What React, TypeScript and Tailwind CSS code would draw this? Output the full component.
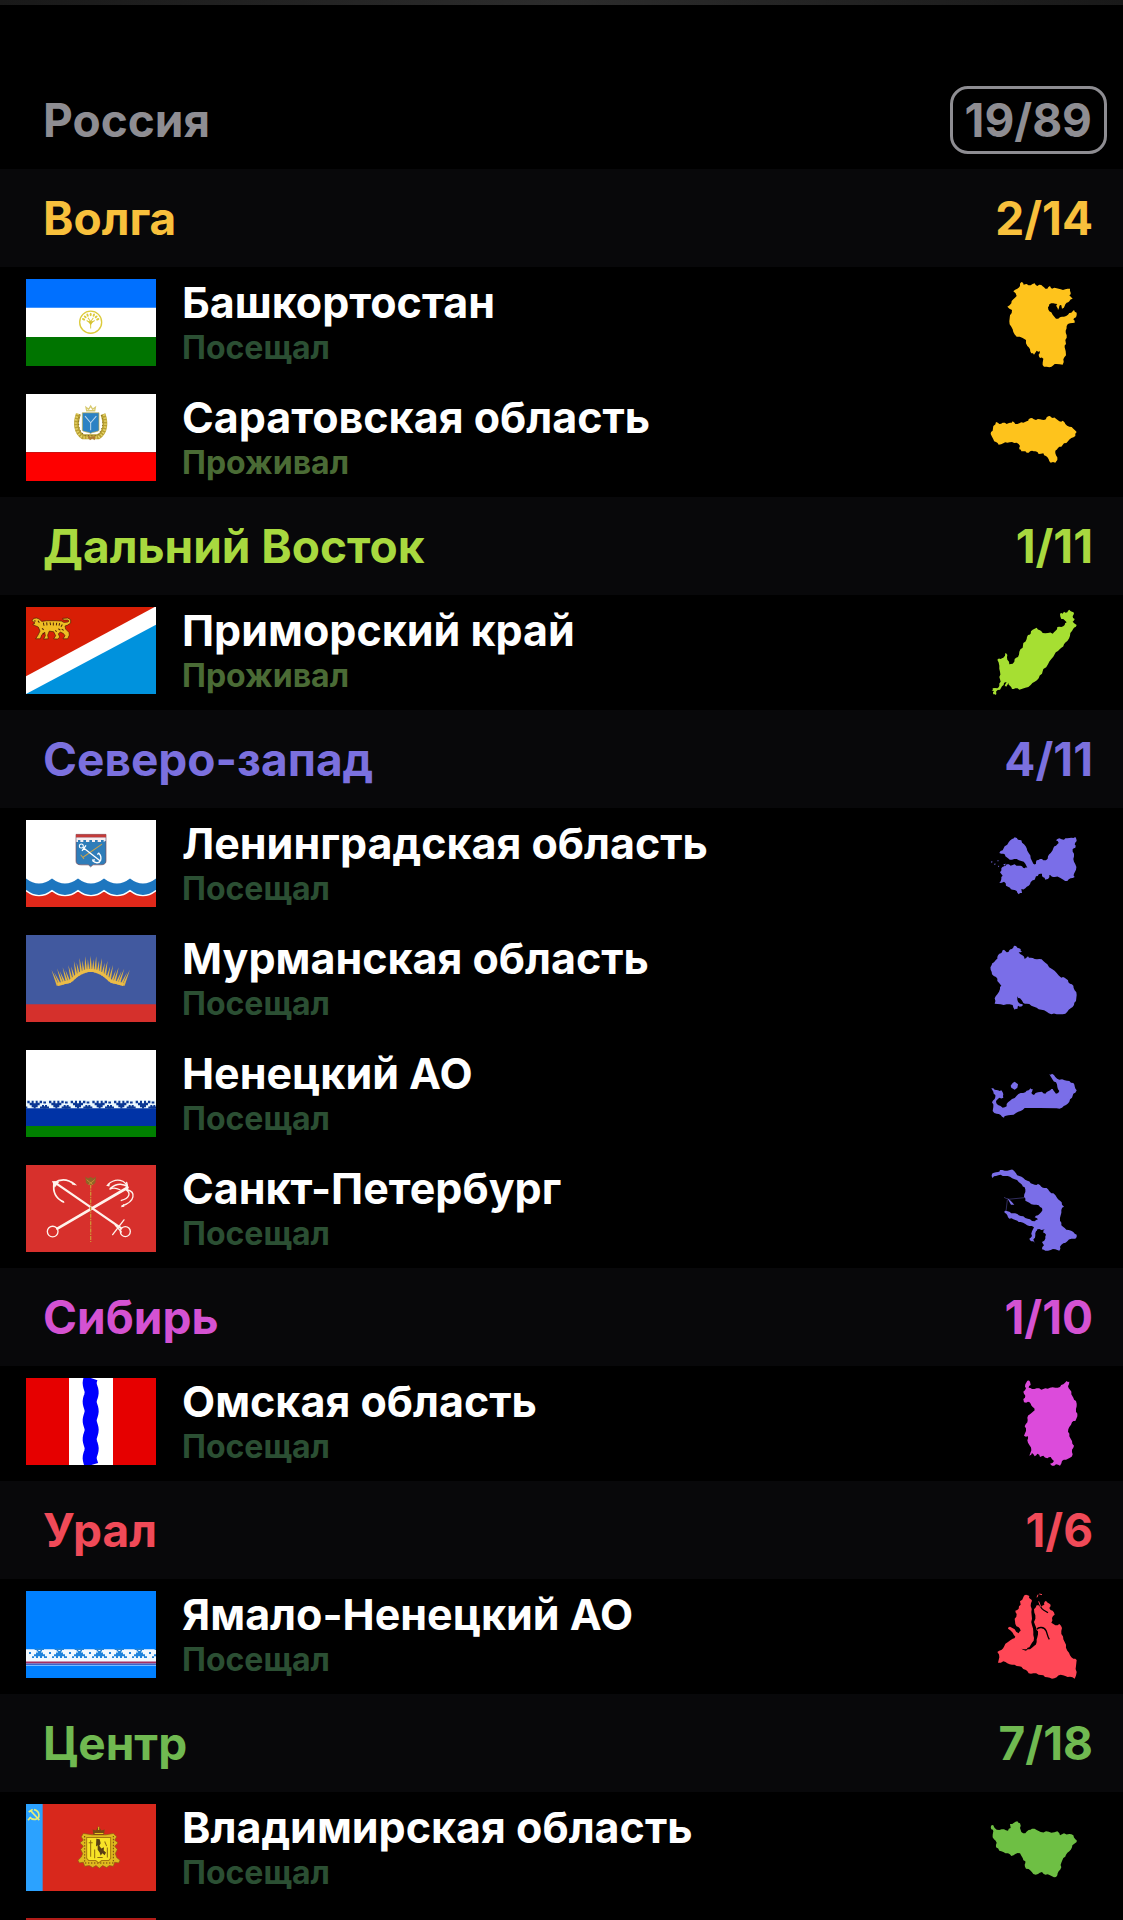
import type { ReactNode } from "react";

type Region = {
  name: string;
  status: "Посещал" | "Проживал";
  flag: ReactNode;
  viewBox: string;
  outline: string;
  extra?: ReactNode;
};

type District = {
  name: string;
  count: string;
  text: string;
  fill: string;
  regions: Region[];
};

const range = (n: number) => Array.from({ length: n }, (_, i) => i);

/** Turns "x,y x,y ..." into a closed path whose edges are slightly rugged, like a real border. */
function borderPath(outline: string) {
  const points = outline.trim().split(/\s+/).map((p) => p.split(",").map(Number));
  let d = "";
  points.forEach(([x, y], i) => {
    const [nx, ny] = points[(i + 1) % points.length];
    const length = Math.hypot(nx - x, ny - y) || 1;
    d += `${i ? "L" : "M"}${x} ${y}`;
    if (length < 30) {
      const side = (((i * 7) % 5) - 2) * 1.1;
      const mx = (x + nx) / 2 - ((ny - y) / length) * side;
      const my = (y + ny) / 2 + ((nx - x) / length) * side;
      d += `L${mx.toFixed(1)} ${my.toFixed(1)}`;
    }
  });
  return `${d}z`;
}

function BashkortostanFlag() {
  return (
    <>
      <path fill="#fff" d="M0 0h390v260H0z" />
      <path fill="#0070ff" d="M0 0h390v86H0z" />
      <path fill="#007400" d="M0 173h390v87H0z" />
      <circle cx="194" cy="129" r="33" fill="none" stroke="#dccb3c" strokeWidth="4" />
      <path fill="none" stroke="#dccb3c" strokeWidth="3" d="M194 148v-24M194 132l-12-8M194 132l12-8M194 128l-8-12M194 128l8-12" />
      {[-68, -46, -24, 0, 24, 46, 68].map((a) => (
        <ellipse key={a} cx="194" cy="106" rx="3" ry="5" fill="#dccb3c" transform={`rotate(${a} 194 129)`} />
      ))}
      <path fill="#d4c02e" d="M186 126h16l-8 12z" />
    </>
  );
}

function SaratovFlag() {
  return (
    <>
      <path fill="#fff" d="M0 0h390v174H0z" />
      <path fill="#fe0000" d="M0 174h390v86H0z" />
      <path fill="none" stroke="#b9a032" strokeWidth="15" d="M157 60c-9 26-8 54 14 68h46c22-14 23-42 14-68" />
      <path fill="none" stroke="#e6d46a" strokeWidth="8" strokeDasharray="4 5" d="M155 58c-9 28-8 58 16 72h46c24-14 25-44 16-72" />
      <path fill="none" stroke="#7d6a24" strokeWidth="3" strokeDasharray="3 7" d="M162 60c-8 26-5 50 14 64h36c19-14 22-38 14-64" />
      <path fill="#2b82c4" stroke="#c8b04a" strokeWidth="2" d="M169 56h50v52c0 5-20 5-25 10-5-5-25-5-25-10z" />
      <path fill="none" stroke="#bcd9ee" strokeWidth="3" d="M177 66l17 20 17-20M194 86v22" />
      <path fill="none" stroke="#d8ca70" strokeWidth="4" d="M182 50l-2-10 8 6 6-10 6 10 8-6-2 10z" />
      <path fill="#b07a34" d="M184 126h8l3 4 4-4h9l-2 12-7-5-7 5z" />
    </>
  );
}

function PrimoryeFlag() {
  return (
    <>
      <path fill="#fff" d="M0 0h390v260H0z" />
      <path fill="#d81e05" d="M0 0h386L0 207z" />
      <path fill="#0092dd" d="M0 260L390 53v207z" />
      <path
        fill="#efbd24"
        stroke="#4a1d08"
        strokeWidth="2"
        strokeLinejoin="round"
        d="M18 41L23 34L32 33L40 36L47 43L62 41L90 41L106 42L114 46L125 45L129 42L125 39L112 39L110 34L125 33L134 38L134 48L125 54L117 57L119 66L129 76L130 84L125 95L111 95L117 86L112 79L103 75L97 80L101 90L95 96L83 95L89 86L83 74L70 72L65 84L67 95L53 96L58 86L56 75L47 84L43 95L29 95L36 84L42 72L37 60L28 56L20 52L27 48z"
      />
      <path fill="none" stroke="#4a1d08" strokeWidth="3" d="M52 47l2 9M62 46l1 9M72 46l2 8M82 46v9M92 47l-1 8M101 48l-2 8M109 52l-4 7M48 64l5 4M97 65l6 4M107 66l6 4M24 42h5M36 41l4 6M50 78l4 3M88 70l4 4" />
    </>
  );
}

function LeningradFlag() {
  const wave = (y: number) =>
    `M0 ${y}` + range(5).map((i) => `Q${i * 78 + 39} ${y + 30} ${i * 78 + 78} ${y}`).join("");
  return (
    <>
      <path fill="#fff" d="M0 0h390v260H0z" />
      <path fill="#1d76bf" d={`${wave(175)}V240H0z`} />
      <path fill="#e0281a" d={`${wave(212)}V260H0z`} />
      <path fill="none" stroke="#fff" strokeWidth="4" d={wave(211)} />
      <path fill="#2f7db9" stroke="#7d4c55" strokeWidth="2" d="M150 43h90v80c0 8-8 11-16 11h-23l-7 6-7-6h-22c-9 0-15-3-15-11z" />
      <path fill="#c43a38" d="M150 43h90v10h-90z" />
      <path fill="#f7eef0" d="M151 52h88v10l-6 4v-6h-8v6h-10v-6h-8v6h-9v-6h-8v6h-10v-6h-8v6h-9v-6h-7v6h-5z" />
      <path fill="none" stroke="#c9a24c" strokeWidth="3" d="M170 112l58-40M164 104l10 12" />
      <circle cx="166" cy="78" r="6" fill="none" stroke="#fff" strokeWidth="3" />
      <path fill="none" stroke="#fff" strokeWidth="4" d="M171 82l50 39M180 76l-12 16M200 122c8 8 20 8 24-2 2-8-1-16-5-20M198 120l9-1M214 103l6-5" />
    </>
  );
}

function MurmanskFlag() {
  const base = (x: number) => {
    const d = Math.abs(x - 194);
    return d < 60 ? 106 + (d * d) / 112 : 138 + (d - 60) * 0.26;
  };
  return (
    <>
      <path fill="#41599f" d="M0 0h390v260H0z" />
      <path fill="#d5302c" d="M0 207h390v53H0z" />
      {range(29).map((i) => {
        const x = 96 + i * 7;
        const y = base(x);
        const dx = (x - 194) * 0.2;
        const length = i % 2 ? 34 : 44;
        return <path key={i} fill="#e2b544" d={`M${x - 4} ${y + 4}L${x + dx} ${y - length}L${x + 4} ${y + 4}z`} />;
      })}
      <path
        fill="none"
        stroke="#ecbc48"
        strokeWidth="9"
        strokeLinejoin="round"
        d={"M" + range(29).map((i) => `${96 + i * 7} ${base(96 + i * 7)}`).join("L")}
      />
    </>
  );
}

function NenetsFlag() {
  return (
    <>
      <path fill="#fff" d="M0 0h390v160H0z" />
      <path fill="#0033a6" d="M0 173h390v54H0z" />
      <path fill="#008000" d="M0 227h390v33H0z" />
      <path fill="#eaf7fd" d="M0 150h390v24H0z" />
      {range(7).map((i) => (
        <g key={i} transform={`translate(${i * 65 - 8} 152)`} fill="#0b3894">
          <path d="M12 0h7v6h6V0h6v7h6V0h6v6h6V0h7v7h-7v6h-6v6h-6v4H31v-4h-6v-6h-6V7h-7z" />
          <path d="M-5 2h8v6h-8zM-6 17h6v-5h6v5h6v6H-6zM50 23v-6h6v-5h6v5h6v6z" />
        </g>
      ))}
    </>
  );
}

function PetersburgFlag() {
  return (
    <>
      <path fill="#d7302c" d="M0 0h390v260H0z" />
      <g fill="none" stroke="#fff3ec" strokeLinecap="round">
        <path strokeWidth="7" d="M86 52l198 136" />
        <path strokeWidth="8" d="M94 190L304 68" />
        <circle cx="80" cy="199" r="16" strokeWidth="4" />
        <circle cx="298" cy="199" r="15" strokeWidth="4" />
        <path strokeWidth="5" d="M84 54c20-14 42-12 62 4M84 54c-4 26 6 46 28 56" />
        <path strokeWidth="4" d="M260 208l34-44M268 180l18 20" />
        <path strokeWidth="4" d="M304 68c-4-24-34-32-58-10M306 66c-16-12-36-10-54 4M302 52c4 10 2 16 2 22M304 74c24 6 26 34-16 48M300 74c16 10 10 26-14 32M282 74c-12-6-22-6-30-2" />
      </g>
      <path fill="#fff3ec" d="M78 48l22 2-14 18zM136 48l18 13-16-3zM102 106l16 6-10-1zM240 62l12-8-2 10zM284 126l10-10 1 9z" />
      <path fill="none" stroke="#cf9136" strokeWidth="4" strokeDasharray="12 3 4 3" d="M194 58v172" />
      <path fill="#8f6427" d="M178 34l8 6 8-4 8 4 8-6-2 20-8 6h-12l-8-6z" />
      <path fill="none" stroke="#d8a23c" strokeWidth="2" d="M182 44l12 10 12-10M188 60l6-8 6 8" />
    </>
  );
}

function OmskFlag() {
  const river = range(53)
    .map((i) => `${(194 - 3 * Math.cos(((i * 5 - 71) / 56) * 2 * Math.PI)).toFixed(1)} ${i * 5}`)
    .join("L");
  return (
    <>
      <path fill="#e60000" d="M0 0h390v260H0z" />
      <path fill="#fff" d="M129 0h132v260H129z" />
      <path fill="none" stroke="#0000fe" strokeWidth="42" d={`M${river}`} />
    </>
  );
}

function YamalFlag() {
  return (
    <>
      <path fill="#0080ff" d="M0 0h390v260H0z" />
      <path fill="#f1f8ff" d="M0 198h390v25H0z" />
      <path fill="#a52f62" d="M0 211h390v6H0z" />
      <path fill="#3e62c8" d="M0 217h390v4H0z" />
      <path fill="#f1f8ff" d="M0 174h390v26H0z" />
      {range(7).map((i) => (
        <g key={i} transform={`translate(${i * 60 - 18} 0)`} fill="#1f83dc">
          <path d="M36 200v-5h6v-6h6v-5h6v-5h9v5h6v5h6v6h6v5h-9v-5h-6v5h-6v-5h-6v5h-6v-5h-6v5z" />
          <path d="M44 172h28v4h-6v5h-5v-5h-6v5h-5v-5h-6zM27 182h6v6h-6z" />
        </g>
      ))}
    </>
  );
}

function VladimirFlag() {
  return (
    <>
      <path fill="#d8281c" d="M0 0h390v260H0z" />
      <path fill="#2ba2ff" d="M0 0h50v260H0z" />
      <path fill="none" stroke="#e3ec7a" strokeWidth="5" d="M24 17c18 4 20 26 4 29-9 1-14-3-17-7M8 24l12-8M14 20l26 28M12 42l-6 6" />
      <path
        fill="#dfb91e"
        stroke="#8a5d14"
        strokeWidth="2"
        d="M198 92L172 88L166 98L172 108L162 116L172 126L164 136L170 148L166 158L156 168L160 176L172 174L176 186L190 184L200 190L210 184L220 192L230 184L242 190L250 184L262 186L266 174L278 176L282 168L272 160L268 148L274 136L266 126L276 116L266 108L272 98L262 88L240 92z"
      />
      <path fill="#7a4a10" d="M202 92l-2-16 10 3 8-13 8 13 10-3-2 16z" />
      <path fill="none" stroke="#e6c51f" strokeWidth="3" d="M206 88h26M218 68v10" />
      <path fill="none" stroke="#6d4110" strokeWidth="3" strokeDasharray="4 5" d="M176 96v80h86V96" />
      <path fill="#f7e327" stroke="#a7780f" strokeWidth="3" d="M182 100h72v62l-6 7h-21l-9 7-9-7h-21l-6-7z" />
      <path fill="#5a3f14" d="M211 104l10 1 3 12-4 8 6 8 8-4-1 10 7 6-4 8-7-6-5 8-3-10-6-8v-14l-5 4z" />
      <path fill="none" stroke="#8f6a10" strokeWidth="3" d="M194 108v50M188 116h12M206 136v26M236 112l6 14M244 130v30M214 160h16" />
    </>
  );
}

const districts: District[] = [
  {
    name: "Волга",
    count: "2/14",
    text: "text-[#f8c03c]",
    fill: "text-[#fec31c]",
    regions: [
      {
        name: "Башкортостан",
        status: "Посещал",
        flag: <BashkortostanFlag />,
        viewBox: "90 63 261 261",
        outline:
          "184,66 191,74 200,72 212,76 224,70 232,78 244,75 252,82 262,86 270,78 276,86 290,85 302,88 316,88 330,86 332,98 328,106 338,116 328,124 320,128 314,138 306,146 304,136 298,138 294,150 290,140 292,132 280,130 268,133 264,142 268,154 278,164 288,176 300,172 312,170 324,164 334,158 342,150 350,158 348,172 340,178 344,188 330,190 320,198 317,212 320,226 316,240 318,252 314,262 318,286 310,298 308,314 290,312 280,316 268,322 252,320 248,308 250,296 240,294 236,284 240,274 230,272 222,284 214,280 210,268 202,258 198,240 188,234 170,230 160,216 154,200 148,184 150,166 156,150 142,140 154,130 160,118 170,108 160,94 172,86 180,78",
      },
      {
        name: "Саратовская область",
        status: "Проживал",
        flag: <SaratovFlag />,
        viewBox: "90 406 261 261",
        outline:
          "92,520 98,510 100,496 108,484 118,490 128,486 140,490 150,486 158,482 166,490 178,488 190,486 200,482 206,476 216,472 228,478 240,476 252,478 260,470 270,466 278,472 288,474 298,482 308,480 316,490 328,498 340,504 350,514 346,526 334,532 324,542 312,548 304,558 294,562 286,570 288,584 292,598 286,606 272,606 266,596 258,586 250,578 236,580 226,572 216,570 206,576 196,572 184,572 178,566 180,556 170,546 156,544 142,546 130,548 116,552 108,544 100,536",
      },
    ],
  },
  {
    name: "Дальний Восток",
    count: "1/11",
    text: "text-[#a8d93f]",
    fill: "text-[#a6df32]",
    regions: [
      {
        name: "Приморский край",
        status: "Проживал",
        flag: <PrimoryeFlag />,
        viewBox: "90 58 261 261",
        outline:
          "300,72 308,72 312,66 322,68 328,60 336,66 342,72 338,80 344,88 338,96 350,106 342,114 336,124 330,138 322,154 312,164 304,174 294,184 284,194 274,208 264,224 250,238 246,252 236,266 224,276 212,286 196,294 178,300 166,296 156,298 150,288 146,280 138,292 134,290 140,278 132,280 126,290 120,300 108,306 108,316 100,314 102,304 95,302 98,296 112,296 118,288 122,276 118,262 120,246 118,228 112,210 122,208 130,204 136,190 142,196 142,210 148,224 158,222 164,208 174,202 178,186 188,174 190,160 200,148 204,136 212,132 218,120 230,114 240,122 248,130 264,130 278,132 286,124 292,112 304,112 314,106 320,98 314,92 304,88",
      },
    ],
  },
  {
    name: "Северо-запад",
    count: "4/11",
    text: "text-[#7b70de]",
    fill: "text-[#7a6ee8]",
    regions: [
      {
        name: "Ленинградская область",
        status: "Посещал",
        flag: <LeningradFlag />,
        viewBox: "90 697 261 261",
        outline:
          "118,790 128,782 134,770 146,758 156,748 164,743 174,750 184,752 192,764 200,776 206,790 212,806 220,822 228,822 230,812 240,808 250,812 258,812 264,800 272,790 280,776 288,768 296,760 288,752 298,746 312,750 322,746 334,744 346,742 350,754 344,764 346,774 338,778 342,792 340,808 346,824 348,840 342,852 344,862 332,866 322,874 310,870 300,864 284,862 274,860 268,856 264,868 256,870 248,862 246,852 236,854 228,860 224,870 212,878 206,888 196,896 184,898 186,910 176,914 170,904 158,900 150,894 138,888 132,876 118,880 124,868 128,858 120,848 124,836 132,830 140,824 152,828 164,824 176,828 186,830 194,836 202,834 196,822 184,814 170,808 156,810 144,806 136,800 130,792",
        extra: <path d="M93 815l5 1-3 4zM102 822l6 0-4 4zM112 812l4 0-2 4zM130 824l8-2-5 6zM114 828l4 1-3 4z" />,
      },
      {
        name: "Мурманская область",
        status: "Посещал",
        flag: <MurmanskFlag />,
        viewBox: "90 84 261 261",
        outline:
          "95,168 102,160 108,152 112,144 118,134 126,130 132,122 140,130 148,124 156,120 162,110 172,116 182,120 186,128 176,130 186,138 194,150 204,142 212,146 224,150 238,150 250,156 262,166 276,180 290,192 304,206 314,206 324,214 330,224 340,230 344,244 350,258 348,276 342,288 332,298 322,308 308,316 290,316 274,316 260,308 244,302 230,296 214,290 200,284 190,282 180,268 172,262 172,272 180,284 190,288 186,292 174,290 172,300 164,302 158,288 140,286 122,286 104,284 104,268 112,256 120,240 124,230 112,216 108,204 96,196 92,182",
      },
      {
        name: "Ненецкий АО",
        status: "Посещал",
        flag: <NenetsFlag />,
        viewBox: "90 425 261 261",
        outline:
          "94,534 104,538 114,540 124,540 130,552 130,562 118,562 108,572 114,584 128,592 140,588 144,576 156,566 170,556 182,548 196,546 206,540 212,534 218,536 214,548 222,554 234,546 246,544 256,550 266,542 274,536 280,540 288,550 298,542 292,530 288,516 278,508 268,492 276,490 286,500 298,508 314,510 328,512 340,518 344,528 350,540 340,550 336,562 328,574 318,584 306,592 290,594 240,593 194,593 182,602 168,608 152,614 138,616 132,622 122,614 110,610 98,602 100,590 96,576 104,566 106,554 100,544",
        extra: <path d="M152 526l6-8 6-4 10 8-2 10-8 6-10-6z" />,
      },
      {
        name: "Санкт-Петербург",
        status: "Посещал",
        flag: <PetersburgFlag />,
        viewBox: "90 773 261 261",
        outline:
          "95,798 102,790 114,788 120,782 134,784 150,782 162,784 168,792 178,800 190,806 202,814 212,822 224,826 234,824 244,832 254,836 264,840 270,848 280,852 290,864 300,874 306,886 312,892 304,902 302,918 300,934 304,948 314,956 326,962 340,968 350,976 346,988 334,988 322,996 310,1002 300,1012 298,1024 286,1020 272,1022 256,1024 246,1020 252,1008 246,998 256,988 258,976 250,970 254,960 244,962 232,960 228,966 226,978 220,990 224,1000 214,996 208,988 216,980 216,966 222,954 208,950 196,944 182,938 172,934 160,930 148,928 142,918 134,910 136,904 150,908 158,912 172,914 182,920 196,926 210,930 224,936 234,930 224,924 234,918 244,908 246,896 236,888 222,886 208,880 196,874 192,862 196,848 194,834 186,826 176,818 164,810 150,802 136,800 122,796 108,800 98,806",
        extra: (
          <>
            <path fill="none" stroke="currentColor" strokeWidth="2" opacity="0.6" d="M132 864l12 6 50-5M142 872l-4 34" />
            <path d="M142 866l10 8 11 12-10 0-5-9z" />
          </>
        ),
      },
    ],
  },
  {
    name: "Сибирь",
    count: "1/10",
    text: "text-[#d452d2]",
    fill: "text-[#dc4bdb]",
    regions: [
      {
        name: "Омская область",
        status: "Посещал",
        flag: <OmskFlag />,
        viewBox: "90 63 261 261",
        outline:
          "202,65 210,68 212,78 206,86 216,90 230,88 244,92 256,88 270,86 286,86 300,84 310,76 320,66 328,68 324,82 330,92 334,106 340,116 348,126 350,142 348,158 352,172 346,186 336,190 328,204 324,218 328,232 336,246 342,260 336,272 338,286 330,296 318,302 306,306 300,320 288,316 276,320 270,314 282,306 272,294 262,298 250,290 240,294 232,284 224,292 216,282 208,290 214,274 208,258 202,244 204,232 192,230 198,216 194,202 202,190 202,176 210,166 224,154 218,144 212,134 204,128 192,130 190,120 196,110 190,98 198,88 196,76",
      },
    ],
  },
  {
    name: "Урал",
    count: "1/6",
    text: "text-[#f04a58]",
    fill: "text-[#ff4756]",
    regions: [
      {
        name: "Ямало-Ненецкий АО",
        status: "Посещал",
        flag: <YamalFlag />,
        viewBox: "90 703 261 261",
        outline:
          "190,716 198,708 208,712 210,720 216,726 212,742 214,760 216,780 216,800 220,820 222,838 216,852 208,866 200,872 184,870 198,876 210,872 222,862 230,850 232,836 234,818 228,806 222,790 226,770 222,752 230,740 240,744 250,740 252,734 258,726 266,734 272,742 268,748 278,756 284,768 276,778 274,792 286,800 298,796 306,808 304,826 310,842 318,858 322,876 330,890 340,900 350,904 348,922 350,940 344,960 330,954 316,952 302,948 290,956 276,960 262,956 250,950 236,948 220,944 206,944 198,934 184,924 170,922 156,918 142,914 130,908 114,912 118,896 112,880 124,874 132,864 144,850 158,840 166,834 158,822 144,810 150,804 164,812 176,824 182,816 176,806 166,796 164,780 170,766 166,756 176,750 182,738 180,728",
        extra: (
          <>
            <path fill="none" stroke="#000" strokeWidth="4" d="M230 812c6-8 22-8 28 4 4 8 4 18 10 26M242 742c0 10 12 14 22 20" />
            <path fill="none" stroke="currentColor" strokeWidth="3" d="M242 744l-6-16M231 716l3-8M238 706l8 2" />
          </>
        ),
      },
    ],
  },
  {
    name: "Центр",
    count: "7/18",
    text: "text-[#70b951]",
    fill: "text-[#6ebf44]",
    regions: [
      {
        name: "Владимирская область",
        status: "Посещал",
        flag: <VladimirFlag />,
        viewBox: "90 320 261 261",
        outline:
          "93,380 100,378 104,386 118,392 132,390 144,394 152,386 150,374 162,370 172,366 180,372 180,386 184,398 196,402 206,392 216,388 230,392 242,398 258,396 274,400 292,396 300,408 312,402 328,404 340,408 346,420 350,428 342,434 336,444 328,456 318,466 310,476 304,490 304,504 296,516 292,528 282,534 270,528 256,526 246,518 234,524 220,524 212,514 198,508 194,496 196,486 188,476 180,462 166,464 154,470 144,462 130,458 118,454 108,444 110,430 102,420 98,406 100,396 94,390",
      },
    ],
  },
];

function Flag({ children, label }: { children: ReactNode; label: string }) {
  return (
    <svg viewBox="0 0 390 260" role="img" aria-label={label} className="h-[87px] w-[130px] shrink-0" preserveAspectRatio="none">
      {children}
    </svg>
  );
}

function RegionRow({ region, fill }: { region: Region; fill: string }) {
  return (
    <li className="flex h-[115px] items-start pt-3 pr-[46px] pl-[26px]">
      <Flag label={`Флаг: ${region.name}`}>{region.flag}</Flag>
      <div className="ml-[26px] min-w-0 flex-1">
        <h3 className="text-[43px] leading-[46px] font-bold whitespace-nowrap text-white">{region.name}</h3>
        <p
          className={
            region.status === "Посещал"
              ? "text-[32px] leading-[46px] font-bold text-[#2b4f33]"
              : "text-[32px] leading-[46px] font-bold text-[#4a6b35]"
          }
        >
          {region.status}
        </p>
      </div>
      <svg viewBox={region.viewBox} aria-hidden="true" className={`mt-[2px] size-[87px] shrink-0 overflow-visible fill-current ${fill}`}>
        <path d={borderPath(region.outline)} />
        {region.extra}
      </svg>
    </li>
  );
}

export default function App() {
  return (
    <main className="h-screen overflow-hidden bg-black font-['Inter','Liberation_Sans',sans-serif]">
      <div className="h-[5px] bg-linear-to-r from-[#191919] via-[#2c2c2c] to-[#191919]" />
      <header className="flex items-center justify-between pt-[81px] pr-4 pb-[15px] pl-[43px] text-[#8e8d92]">
        <h1 className="text-[46px] leading-[54px] font-bold">Россия</h1>
        <span className="rounded-[18px] border-[3px] border-[#8e8d92] px-3 py-1 text-[46px] leading-[54px] font-bold">
          19/89
        </span>
      </header>
      {districts.map((district) => (
        <section key={district.name}>
          <div
            className={`flex h-[98px] items-center justify-between bg-[#08080a] pr-[30px] pl-[43px] text-[46px] leading-[54px] font-bold ${district.text}`}
          >
            <h2>{district.name}</h2>
            <span>{district.count}</span>
          </div>
          <ul>
            {district.regions.map((region) => (
              <RegionRow key={region.name} region={region} fill={district.fill} />
            ))}
          </ul>
        </section>
      ))}
      <div className="pt-[11px] pl-[26px]">
        <div className="h-[87px] w-[130px] bg-[#b01c18]" />
      </div>
    </main>
  );
}
